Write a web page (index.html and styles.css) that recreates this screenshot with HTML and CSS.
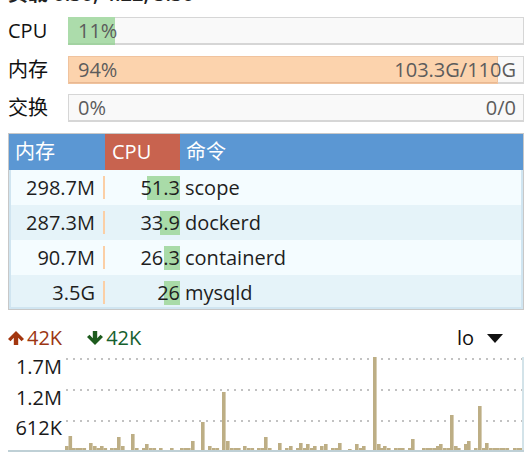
FILE: index.html
```html
<!DOCTYPE html>
<html lang="zh-CN">
<head>
<meta charset="utf-8">
<title>monitor</title>
<link rel="stylesheet" href="styles.css">
</head>
<body>
<div class="page">
  <div class="load">负载 0.30, 4.22, 5.30</div>

  <div class="meters">
    <div class="meter">
      <span class="label">CPU</span>
      <div class="bar">
        <div class="fill cpu" style="width:10.3%"></div>
        <div class="txt"><span>11%</span><span></span></div>
      </div>
    </div>
    <div class="meter">
      <span class="label">内存</span>
      <div class="bar">
        <div class="fill mem" style="width:94.3%"></div>
        <div class="txt"><span>94%</span><span>103.3G/110G</span></div>
      </div>
    </div>
    <div class="meter">
      <span class="label">交换</span>
      <div class="bar">
        <div class="fill" style="width:0%"></div>
        <div class="txt"><span>0%</span><span>0/0</span></div>
      </div>
    </div>
  </div>

  <div class="procs">
    <div class="head">
      <span class="h-mem">内存</span>
      <span class="h-cpu">CPU</span>
      <span class="h-cmd">命令</span>
    </div>
    <div class="rows">
      <div class="row">
        <span class="c-mem"><span>298.7M</span><i class="mbar"></i></span>
        <span class="c-cpu"><b class="cbar" style="width:33px"></b><span>51.3</span></span>
        <span class="c-cmd">scope</span>
      </div>
      <div class="row">
        <span class="c-mem"><span>287.3M</span><i class="mbar"></i></span>
        <span class="c-cpu"><b class="cbar" style="width:20px"></b><span>33.9</span></span>
        <span class="c-cmd">dockerd</span>
      </div>
      <div class="row">
        <span class="c-mem"><span>90.7M</span><i class="mbar"></i></span>
        <span class="c-cpu"><b class="cbar" style="width:16px"></b><span>26.3</span></span>
        <span class="c-cmd">containerd</span>
      </div>
      <div class="row">
        <span class="c-mem"><span>3.5G</span><i class="mbar"></i></span>
        <span class="c-cpu"><b class="cbar" style="width:16px"></b><span>26</span></span>
        <span class="c-cmd">mysqld</span>
      </div>
    </div>
  </div>

  <div class="net">
    <span class="up">
      <svg width="16" height="14" viewBox="0 0 16 14"><path d="M8 0 L16 8 L13.5 10.2 L10.2 6.8 L10.2 14 L5.8 14 L5.8 6.8 L2.5 10.2 L0 8 Z" fill="#a3360f"/></svg>
      <span>42K</span>
    </span>
    <span class="down">
      <svg width="16" height="14" viewBox="0 0 16 14"><path d="M8 14 L16 6 L13.5 3.8 L10.2 7.2 L10.2 0 L5.8 0 L5.8 7.2 L2.5 3.8 L0 6 Z" fill="#1d5b1d"/></svg>
      <span>42K</span>
    </span>
    <span class="iface">
      <span>lo</span>
      <svg width="16" height="9" viewBox="0 0 16 9"><polygon points="0,0 16,0 8,9" fill="#111"/></svg>
    </span>
  </div>

  <div class="chart">
    <div class="yaxis">
      <span>1.7M</span>
      <span>1.2M</span>
      <span>612K</span>
    </div>
    <div class="plot">
      <svg width="457" height="93" viewBox="0 0 457 93">
        <g stroke="#c2c2c2" stroke-width="2" stroke-dasharray="2 5">
          <line x1="1" y1="2" x2="457" y2="2"/>
          <line x1="1" y1="33" x2="457" y2="33"/>
          <line x1="1" y1="64" x2="457" y2="64"/>
        </g>
        <g fill="#bdae85">
          <rect x="0" y="89" width="3.6" height="4"/>
          <rect x="3.5" y="79" width="3.6" height="14"/>
          <rect x="7" y="91" width="3.6" height="2"/>
          <rect x="10.5" y="91" width="3.6" height="2"/>
          <rect x="14" y="91" width="3.6" height="2"/>
          <rect x="17.5" y="91" width="3.6" height="2"/>
          <rect x="24" y="86" width="3.6" height="7"/>
          <rect x="28" y="89" width="3.6" height="4"/>
          <rect x="31.5" y="91" width="3.6" height="2"/>
          <rect x="35" y="89" width="3.6" height="4"/>
          <rect x="38.5" y="91" width="3.6" height="2"/>
          <rect x="45" y="91" width="3.6" height="2"/>
          <rect x="48.5" y="91" width="3.6" height="2"/>
          <rect x="52" y="80" width="3.6" height="13"/>
          <rect x="56" y="89" width="3.6" height="4"/>
          <rect x="66" y="77" width="3.6" height="16"/>
          <rect x="70" y="91" width="3.6" height="2"/>
          <rect x="77" y="91" width="3.6" height="2"/>
          <rect x="80" y="87" width="3.6" height="6"/>
          <rect x="84" y="91" width="3.6" height="2"/>
          <rect x="87.5" y="91" width="3.6" height="2"/>
          <rect x="94" y="91" width="3.6" height="2"/>
          <rect x="105" y="91" width="3.6" height="2"/>
          <rect x="115" y="91" width="3.6" height="2"/>
          <rect x="118.5" y="91" width="3.6" height="2"/>
          <rect x="122" y="91" width="3.6" height="2"/>
          <rect x="126" y="84" width="3.6" height="9"/>
          <rect x="136" y="65" width="3.6" height="28"/>
          <rect x="143" y="89" width="3.6" height="4"/>
          <rect x="147" y="91" width="3.6" height="2"/>
          <rect x="150.5" y="91" width="3.6" height="2"/>
          <rect x="157" y="35" width="3.6" height="58"/>
          <rect x="161" y="84" width="3.6" height="9"/>
          <rect x="165" y="91" width="3.6" height="2"/>
          <rect x="168.5" y="91" width="3.6" height="2"/>
          <rect x="172" y="91" width="3.6" height="2"/>
          <rect x="178" y="89" width="3.6" height="4"/>
          <rect x="182" y="91" width="3.6" height="2"/>
          <rect x="185.5" y="91" width="3.6" height="2"/>
          <rect x="192" y="91" width="3.6" height="2"/>
          <rect x="195.5" y="91" width="3.6" height="2"/>
          <rect x="199" y="80" width="3.6" height="13"/>
          <rect x="203" y="91" width="3.6" height="2"/>
          <rect x="213" y="86" width="3.6" height="7"/>
          <rect x="220" y="91" width="3.6" height="2"/>
          <rect x="224" y="89" width="3.6" height="4"/>
          <rect x="231" y="91" width="3.6" height="2"/>
          <rect x="234" y="86" width="3.6" height="7"/>
          <rect x="238" y="91" width="3.6" height="2"/>
          <rect x="241" y="87" width="3.6" height="6"/>
          <rect x="245" y="91" width="3.6" height="2"/>
          <rect x="248" y="89" width="3.6" height="4"/>
          <rect x="255" y="89" width="3.6" height="4"/>
          <rect x="259" y="87" width="3.6" height="6"/>
          <rect x="266" y="91" width="3.6" height="2"/>
          <rect x="269.5" y="91" width="3.6" height="2"/>
          <rect x="273" y="86" width="3.6" height="7"/>
          <rect x="283" y="92" width="3.6" height="1"/>
          <rect x="290" y="87" width="3.6" height="6"/>
          <rect x="294" y="91" width="3.6" height="2"/>
          <rect x="297" y="89" width="3.6" height="4"/>
          <rect x="308" y="0" width="3.6" height="93"/>
          <rect x="312" y="87" width="3.6" height="6"/>
          <rect x="315" y="91" width="3.6" height="2"/>
          <rect x="318" y="89" width="3.6" height="4"/>
          <rect x="322" y="91" width="3.6" height="2"/>
          <rect x="329" y="91" width="3.6" height="2"/>
          <rect x="332.5" y="91" width="3.6" height="2"/>
          <rect x="336" y="91" width="3.6" height="2"/>
          <rect x="343" y="91" width="3.6" height="2"/>
          <rect x="346" y="82" width="3.6" height="11"/>
          <rect x="357" y="91" width="3.6" height="2"/>
          <rect x="360.5" y="91" width="3.6" height="2"/>
          <rect x="364" y="91" width="3.6" height="2"/>
          <rect x="367.5" y="91" width="3.6" height="2"/>
          <rect x="371" y="89" width="3.6" height="4"/>
          <rect x="374" y="87" width="3.6" height="6"/>
          <rect x="378" y="91" width="3.6" height="2"/>
          <rect x="381.5" y="91" width="3.6" height="2"/>
          <rect x="385" y="58" width="3.6" height="35"/>
          <rect x="389" y="89" width="3.6" height="4"/>
          <rect x="392" y="91" width="3.6" height="2"/>
          <rect x="399" y="87" width="3.6" height="6"/>
          <rect x="402" y="84" width="3.6" height="9"/>
          <rect x="409" y="91" width="3.6" height="2"/>
          <rect x="413" y="49" width="3.6" height="44"/>
          <rect x="417" y="91" width="3.6" height="2"/>
          <rect x="420" y="86" width="3.6" height="7"/>
          <rect x="424" y="91" width="3.6" height="2"/>
          <rect x="427.5" y="91" width="3.6" height="2"/>
          <rect x="431" y="91" width="3.6" height="2"/>
          <rect x="434.5" y="91" width="3.6" height="2"/>
          <rect x="437" y="91" width="3.6" height="2"/>
          <rect x="440.5" y="91" width="3.6" height="2"/>
          <rect x="448" y="91" width="3.6" height="2"/>
          <rect x="451.5" y="91" width="3.6" height="2"/>
          <rect x="454" y="91" width="3" height="2"/>
        </g>
      </svg>
    </div>
  </div>
</div>
</body>
</html>
```

FILE: styles.css
```css
html, body {
  margin: 0;
  padding: 0;
  background: #fff;
  overflow: hidden;
}

body {
  font-family: "Open Sans", "Noto Sans CJK SC", sans-serif;
  font-size: 20px;
  color: #111;
}

.page {
  padding: 0 6px 0 8px;
}

.load {
  height: 24px;
  line-height: 24px;
  margin-top: -18px;
  color: #222;
  font-weight: 600;
}

.meters {
  display: flex;
  flex-direction: column;
  gap: 10.5px;
  margin-top: 11px;
}

.meter {
  display: grid;
  grid-template-columns: 60px 1fr;
  align-items: center;
  height: 28px;
}

.label {
  line-height: 28px;
  color: #111;
}

.bar {
  display: grid;
  height: 28px;
  background: #f9f9f9;
  box-shadow: inset 0 0 0 1px #d6d6d6, inset 0 -2px 0 #d6d6d6;
}

.bar > * {
  grid-area: 1 / 1;
}

.fill {
  height: 100%;
}

.fill.cpu {
  background: #acdcab;
  box-shadow: inset 0 -2px 0 #a2d2a1;
}

.fill.mem {
  background: #fcd3ad;
  box-shadow: inset 0 0 0 1px #f0c39e, inset 0 -2px 0 #e9b892;
}

.txt {
  display: flex;
  justify-content: space-between;
  padding: 0 8px 0 10px;
  line-height: 28px;
  color: #5c5c5c;
}

.procs {
  margin-top: 11px;
  border: 1px solid #c8c8c8;
  background: #d0e5f1;
}

.head {
  display: grid;
  grid-template-columns: 96px 75px 1fr;
  height: 36px;
  line-height: 36px;
  background: #5b97d3;
  color: #fff;
}

.head > span {
  padding-left: 6px;
}

.head .h-cpu {
  background: #c8634f;
  padding-left: 7px;
}

.rows {
  height: 137px;
  overflow: hidden;
  margin: 0 2px 2px;
}

.row {
  display: grid;
  grid-template-columns: 94px 75px 1fr;
  height: 35px;
  line-height: 35px;
  color: #1e1e1e;
}

.row:nth-child(odd) {
  background: #f4fcff;
}

.row:nth-child(even) {
  background: #e5f3f9;
}

.c-mem {
  display: flex;
  justify-content: flex-end;
  align-items: center;
  gap: 8px;
}

.mbar {
  width: 2px;
  height: 23px;
  background: #fbcfa6;
}

.c-cpu {
  display: grid;
  align-items: center;
}

.c-cpu > * {
  grid-area: 1 / 1;
  justify-self: end;
}

.cbar {
  height: 24px;
  background: #a9dba8;
}

.c-cmd {
  padding-left: 5px;
}

.net {
  display: flex;
  align-items: center;
  height: 24px;
  line-height: 24px;
  margin-top: 16px;
}

.up, .down {
  display: flex;
  align-items: center;
  gap: 3px;
}

.up {
  color: #9c3612;
}

.down {
  color: #15602e;
  margin-left: 25px;
}

.iface {
  margin-left: auto;
  margin-right: 21px;
  display: flex;
  align-items: center;
  gap: 13px;
  color: #111;
}

.chart {
  display: grid;
  grid-template-columns: 57px 1fr;
  margin-top: 7px;
  border-bottom: 2px solid #bfd0d6;
}

.yaxis {
  display: flex;
  flex-direction: column;
  align-items: flex-end;
  gap: 10.5px;
  padding-right: 3px;
  line-height: 20px;
  color: #1a1a1a;
}

.plot {
  height: 93px;
  border-right: 2px solid #d3e3e9;
}

.plot svg {
  display: block;
}
```
